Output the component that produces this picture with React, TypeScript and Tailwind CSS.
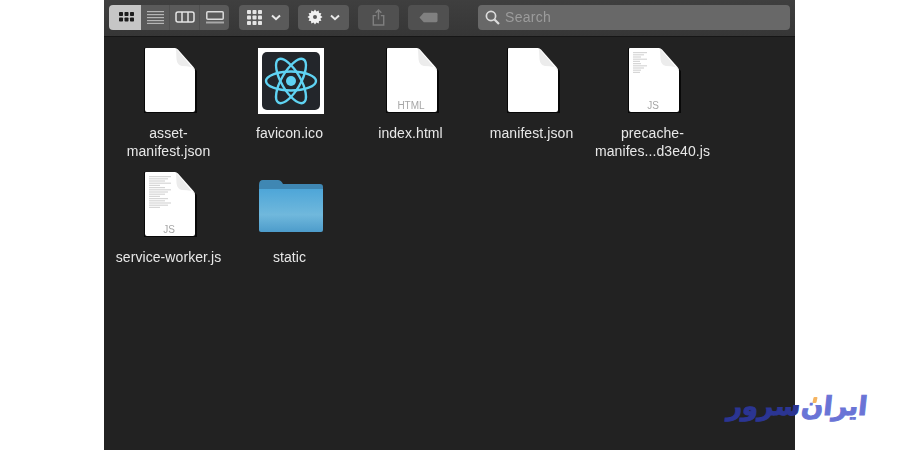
const files = [
  { name: ['asset-', 'manifest.json'], kind: 'blank' },
  { name: ['favicon.ico'], kind: 'react' },
  { name: ['index.html'], kind: 'html' },
  { name: ['manifest.json'], kind: 'blank' },
  { name: ['precache-', 'manifes...d3e40.js'], kind: 'jsTop' },
  { name: ['service-worker.js'], kind: 'jsFull' },
  { name: ['static'], kind: 'folder' },
]

function Paper({ tag, lines = 0, lineWidth = 16 }: { tag?: string; lines?: number; lineWidth?: number }) {
  const rows = []
  for (let i = 0; i < lines; i++) {
    rows.push(<rect key={i} x="12" y={5 + i * 2.2} width={i % 5 === 4 ? lineWidth * 0.5 : lineWidth - (i % 3) * 3} height="1.2" fill="#d6d6d6" />)
  }
  return (
    <div className="relative w-[66px] h-[66px]">
      <svg width="66" height="66" viewBox="0 0 66 66">
        <path d="M7 1 H39 L60 24 V66 H7 Z" fill="#000" opacity="0.75" />
        <path d="M9 1 H38 Q39.5 1 41 2.5 L56.5 20 Q58 21.5 58 24 V63 Q58 65 56 65 H10 Q8 65 8 63 V2 Q8 1 9 1 Z" fill="#fff" />
        {rows}
        <path d="M39 1.5 L58 24 Q58 21 54 20 Q50 19 45 19 Q40 18 39.5 12 Z" fill="#ececec" />
      </svg>
      {tag && <span className="absolute left-[-1px] right-0 bottom-[1px] text-center text-[10px] leading-[12px] text-[#a6a6a6]">{tag}</span>}
    </div>
  )
}

function ReactIcon() {
  return (
    <svg width="66" height="66" viewBox="0 -1 66 66" className="overflow-visible">
      <rect width="66" height="66" fill="#fff" />
      <rect x="4" y="4" width="58" height="58" rx="5" fill="#23262b" />
      <g fill="none" stroke="#5fd3f3" strokeWidth="2.4">
        <ellipse cx="33" cy="33" rx="25" ry="9.5" />
        <ellipse cx="33" cy="33" rx="25" ry="9.5" transform="rotate(60 33 33)" />
        <ellipse cx="33" cy="33" rx="25" ry="9.5" transform="rotate(120 33 33)" />
      </g>
      <circle cx="33" cy="33" r="5" fill="#5fd3f3" />
    </svg>
  )
}

function FolderIcon() {
  return (
    <svg width="66" height="66" viewBox="0 0 66 66">
      <defs>
        <linearGradient id="fold" x1="0" y1="0" x2="0" y2="1">
          <stop offset="0" stopColor="#4ea6d8" />
          <stop offset="0.6" stopColor="#70b8dc" />
          <stop offset="1" stopColor="#4d9ccb" />
        </linearGradient>
      </defs>
      <path d="M1 14 Q1 9 5 9 H20 Q23 9 25 13 H62 Q65 13 65 16 V22 H1 Z" fill="#3f87b3" />
      <path d="M1 18 H65 V59 Q65 61 63 61 H3 Q1 61 1 59 Z" fill="url(#fold)" />
    </svg>
  )
}

function FileIcon({ kind }: { kind: string }) {
  if (kind === 'react') return <ReactIcon />
  if (kind === 'folder') return <FolderIcon />
  if (kind === 'html') return <Paper tag="HTML" />
  if (kind === 'jsTop') return <Paper tag="JS" lines={10} lineWidth={14} />
  if (kind === 'jsFull') return <Paper tag="JS" lines={15} lineWidth={22} />
  return <Paper />
}

function ToolBtn({ className, children }: { className: string; children?: React.ReactNode }) {
  return <div className={'h-[25px] flex items-center justify-center ' + className}>{children}</div>
}

function Chevron() {
  return (
    <svg width="10" height="7" viewBox="0 0 10 7" fill="none" stroke="#e8e8e8" strokeWidth="2">
      <path d="M1 1.5 L5 5.2 L9 1.5" />
    </svg>
  )
}

function Dots({ color, rows, cols, size }: { color: string; rows: number; cols: number; size: number }) {
  const cells = []
  for (let i = 0; i < rows * cols; i++) cells.push(<rect key={i} x={(i % cols) * (size + 1.5)} y={Math.floor(i / cols) * (size + 1.5)} width={size} height={size} rx="0.8" fill={color} />)
  return (
    <svg width={cols * (size + 1.5) - 1.5} height={rows * (size + 1.5) - 1.5}>{cells}</svg>
  )
}

function Toolbar() {
  return (
    <div className="h-[37px] shrink-0 flex items-center px-[5px] pb-[2px] bg-gradient-to-b from-[#3f3f3f] to-[#363636] border-b border-[#161616]">
      <div className="flex rounded-[4px] overflow-hidden">
        <ToolBtn className="w-[32px] bg-[#c6c6c6] pl-[2px]">
          <Dots color="#1c1c1c" rows={2} cols={3} size={4} />
        </ToolBtn>
        <ToolBtn className="w-[29px] bg-[#5a5a5a] border-r border-[#505050]">
          <svg width="17" height="13" fill="#b5b5b5">
            <rect y="0" width="17" height="1.2" /><rect y="3" width="17" height="1.2" /><rect y="6" width="17" height="1.2" /><rect y="9" width="17" height="1.2" /><rect y="11.8" width="17" height="1.2" />
          </svg>
        </ToolBtn>
        <ToolBtn className="w-[30px] bg-[#5a5a5a] border-r border-[#505050]">
          <svg width="20" height="12" fill="none" stroke="#e4e4e4" strokeWidth="1.5">
            <rect x="1" y="1" width="18" height="10" rx="2" /><path d="M7 1 V11 M13 1 V11" />
          </svg>
        </ToolBtn>
        <ToolBtn className="w-[29px] bg-[#5a5a5a]">
          <svg width="18" height="13" fill="#dcdcdc">
            <rect x="0.8" y="0.8" width="16.4" height="7.5" rx="1" fill="none" stroke="#dcdcdc" strokeWidth="1.5" />
            <rect x="0" y="10.5" width="18" height="2" opacity="0.6" />
          </svg>
        </ToolBtn>
      </div>
      <ToolBtn className="ml-[10px] w-[50px] bg-[#5a5a5a] rounded-[4px] gap-[9px]">
        <Dots color="#e4e4e4" rows={3} cols={3} size={4} />
        <Chevron />
      </ToolBtn>
      <ToolBtn className="ml-[9px] w-[51px] bg-[#5a5a5a] rounded-[4px] gap-[7px]">
        <svg width="16" height="16" viewBox="0 0 16 16" fill="#f2f2f2">
          <path d="M8 0.5 L9.4 2.6 L11.7 1.6 L12 4 L14.4 4.3 L13.4 6.6 L15.5 8 L13.4 9.4 L14.4 11.7 L12 12 L11.7 14.4 L9.4 13.4 L8 15.5 L6.6 13.4 L4.3 14.4 L4 12 L1.6 11.7 L2.6 9.4 L0.5 8 L2.6 6.6 L1.6 4.3 L4 4 L4.3 1.6 L6.6 2.6 Z" />
          <circle cx="8" cy="8" r="2" fill="#5a5a5a" />
        </svg>
        <Chevron />
      </ToolBtn>
      <ToolBtn className="ml-[9px] w-[41px] rounded-[4px] bg-[#505050]">
        <svg width="13" height="17" viewBox="0 0 13 18" fill="none" stroke="#7f7f7f" strokeWidth="1.5">
          <path d="M4 7 H1 V17 H12 V7 H9" /><path d="M6.5 11 V1.5 M3.5 4 L6.5 1 L9.5 4" />
        </svg>
      </ToolBtn>
      <ToolBtn className="ml-[9px] w-[41px] rounded-[4px] bg-[#505050]">
        <svg width="19" height="11" viewBox="0 0 20 11" fill="#808080">
          <path d="M5 0.5 H18 Q19.5 0.5 19.5 2 V9 Q19.5 10.5 18 10.5 H5 L0.5 5.5 Z" />
        </svg>
      </ToolBtn>
      <div className="ml-[29px] flex-1 h-[25px] rounded-[4px] bg-[#686868] flex items-center pl-[7px] gap-[5px]">
        <svg width="15" height="15" viewBox="0 0 15 15" fill="none" stroke="#dcdcdc">
          <circle cx="6" cy="6" r="4.6" strokeWidth="1.7" /><path d="M9.5 9.5 L14 14" strokeWidth="2.2" />
        </svg>
        <span className="text-[14px] tracking-[0.3px] text-[#9c9c9c]">Search</span>
      </div>
    </div>
  )
}

export default function App() {
  return (
    <div className="relative w-[900px] h-[450px] overflow-hidden bg-white font-['Liberation_Sans',Arial,sans-serif]">
      <div className="ml-[104px] w-[691px] h-[450px] flex flex-col bg-[#222222] blur-[0.5px]">
        <Toolbar />
        <div className="pt-[10px] pl-[5px] grid grid-cols-[repeat(5,121px)] auto-rows-[112px] gap-y-[12px]">
          {files.map(f => (
            <div key={f.name.join('')} className="flex flex-col items-center">
              <FileIcon kind={f.kind} />
              <div className="mt-[11px] pr-[2px] text-center text-[14px] tracking-[0.08px] leading-[18px] text-[#e8e8e8] whitespace-nowrap">
                {f.name.map(l => <div key={l}>{l}</div>)}
              </div>
            </div>
          ))}
        </div>
      </div>
      <div dir="rtl" className="absolute left-[727px] top-[384px] w-[141px] flex justify-center gap-[1px] text-[26px] leading-[44px] font-bold font-['DejaVu_Sans',sans-serif] whitespace-nowrap -skew-x-6">
        <span className="text-[#6a74d6] [-webkit-text-stroke:1px_#6a74d6]">ایران</span>
        <span className="text-[#2b3593] [-webkit-text-stroke:1px_#2b3593]">سرور</span>
      </div>
      <span className="absolute left-[813px] top-[397px] w-[4px] h-[6px] rounded-[1px] bg-[#f5b461] -skew-x-12" />
    </div>
  )
}
